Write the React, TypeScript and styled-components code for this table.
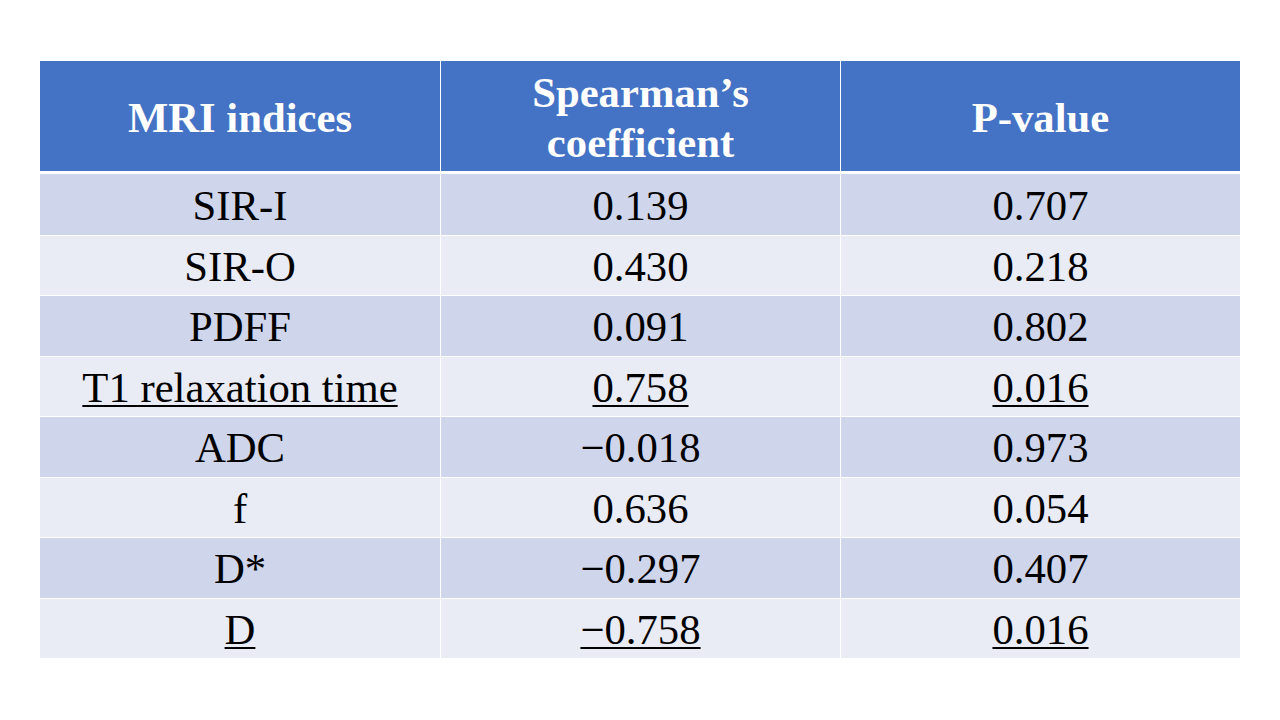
import React from 'react';
import styled, { createGlobalStyle } from 'styled-components';

const rows = [
  { name: 'SIR-I', coef: '0.139', p: '0.707' },
  { name: 'SIR-O', coef: '0.430', p: '0.218' },
  { name: 'PDFF', coef: '0.091', p: '0.802' },
  { name: 'T1 relaxation time', coef: '0.758', p: '0.016', mark: true },
  { name: 'ADC', coef: '\u22120.018', p: '0.973' },
  { name: 'f', coef: '0.636', p: '0.054' },
  { name: 'D*', coef: '\u22120.297', p: '0.407' },
  { name: 'D', coef: '\u22120.758', p: '0.016', mark: true },
];

export default function App() {
  return (
    <>
      <GlobalStyle />
      <Slide>
        <Grid>
          <HeadCell $first>MRI indices</HeadCell>
          <HeadCell>
            Spearman’s
            <br />
            coefficient
          </HeadCell>
          <HeadCell>P-value</HeadCell>
          {rows.map((r, i) => (
            <React.Fragment key={r.name}>
              <Cell $first $band={i % 2 === 0} $top={i > 0}>
                <Text $mark={r.mark}>{r.name}</Text>
              </Cell>
              <Cell $band={i % 2 === 0} $top={i > 0}>
                <Text $mark={r.mark}>{r.coef}</Text>
              </Cell>
              <Cell $band={i % 2 === 0} $top={i > 0}>
                <Text $mark={r.mark}>{r.p}</Text>
              </Cell>
            </React.Fragment>
          ))}
        </Grid>
      </Slide>
    </>
  );
}

const GlobalStyle = createGlobalStyle`
  html, body {
    margin: 0;
    background: #fff;
  }
`;

const Slide = styled.div`
  width: 1280px;
  height: 720px;
  box-sizing: border-box;
  padding: 61px 40px 0;
  background: #fff;
  font-family: 'Liberation Serif', 'Times New Roman', serif;
`;

const Grid = styled.div`
  display: grid;
  grid-template-columns: 400px 400px 400px;
  grid-template-rows: 113px repeat(8, 60.5px);
`;

const HeadCell = styled.div<{ $first?: boolean }>`
  box-sizing: border-box;
  display: flex;
  align-items: center;
  justify-content: center;
  text-align: center;
  padding-top: 3px;
  background: #4472c4;
  color: #fff;
  font-weight: bold;
  font-size: 42.7px;
  line-height: 50px;
  border-bottom: 3px solid #fff;
  border-left: ${(p) => (p.$first ? 'none' : '1px solid #fff')};
`;

const Cell = styled.div<{ $first?: boolean; $band: boolean; $top: boolean }>`
  box-sizing: border-box;
  display: flex;
  align-items: center;
  justify-content: center;
  padding-top: 4px;
  background: ${(p) => (p.$band ? '#cfd5ea' : '#e9ebf5')};
  color: #000;
  font-size: 42.7px;
  line-height: 1;
  border-left: ${(p) => (p.$first ? 'none' : '1px solid #fff')};
  border-top: ${(p) => (p.$top ? '1px solid #fff' : 'none')};
`;

const Text = styled.span<{ $mark?: boolean }>`
  white-space: nowrap;
  text-decoration: ${(p) => (p.$mark ? 'underline' : 'none')};
  text-decoration-thickness: 2px;
  text-underline-offset: 3px;
`;
